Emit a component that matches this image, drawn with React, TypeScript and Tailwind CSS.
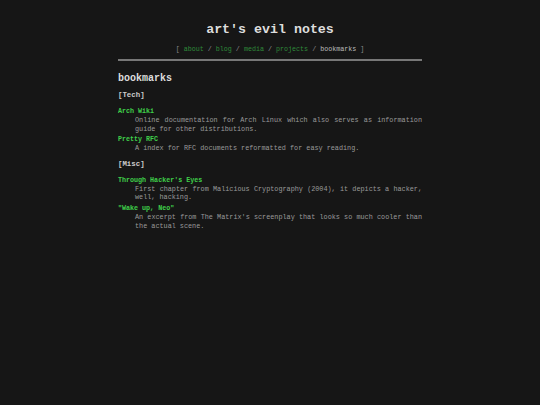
import React from "react";

const sections = [
  {
    name: "Tech",
    items: [
      {
        title: "Arch Wiki",
        desc: "Online documentation for Arch Linux which also serves as information guide for other distributions.",
      },
      {
        title: "Pretty RFC",
        desc: "A index for RFC documents reformatted for easy reading.",
      },
    ],
  },
  {
    name: "Misc",
    items: [
      {
        title: "Through Hacker's Eyes",
        desc: "First chapter from Malicious Cryptography (2004), it depicts a hacker, well, hacking.",
      },
      {
        title: "\"Wake up, Neo\"",
        desc: "An excerpt from The Matrix's screenplay that looks so much cooler than the actual scene.",
      },
    ],
  },
];

const navLinks = ["about", "blog", "media", "projects"];

export default function App() {
  return (
    <div
      className="min-h-[405px] w-full bg-[#161616] text-[#cccccc] antialiased"
      style={{ fontFamily: '"Liberation Mono", "Courier New", monospace' }}
    >
      <div className="mx-auto w-[304px] pt-[22px]">
        {/* Header */}
        <header className="flex flex-col items-center">
          <h1 className="text-[13.3px] font-bold leading-[16px] text-[#dddddd]">
            art's evil notes
          </h1>
          <nav className="mt-[7px] text-[6.7px] leading-[8px] text-[#8a8a8a] whitespace-pre">
            {"[ "}
            {navLinks.map((l) => (
              <span key={l}>
                <a className="text-[#2f8a3a]">{l}</a>
                {" / "}
              </span>
            ))}
            <span className="text-[#bbbbbb]">bookmarks</span>
            {" ]"}
          </nav>
        </header>

        <hr className="mt-[6px] h-[2px] border-0 bg-[#777777]" />

        {/* Main Content */}
        <main className="mt-[12px]">
          <h2 className="text-[10px] font-bold leading-[12px] text-[#dddddd]">bookmarks</h2>
          {sections.map((s, i) => (
            <section key={s.name} className={i === 0 ? "mt-[4px]" : "mt-[5px]"}>
              <h3 className="text-[7.4px] font-bold leading-[12px] text-[#cccccc]">[{s.name}]</h3>
              <dl className="mt-[6px] flex flex-col gap-[2px]">
                {s.items.map((it) => (
                  <div key={it.title}>
                    <dt className="text-[6.7px] font-bold leading-[9px] text-[#3fcf4a]">{it.title}</dt>
                    <dd className="pl-[17px] text-justify text-[6.8px] leading-[8.6px] text-[#9a9a9a]">
                      {it.desc}
                    </dd>
                  </div>
                ))}
              </dl>
            </section>
          ))}
        </main>
      </div>
    </div>
  );
}
